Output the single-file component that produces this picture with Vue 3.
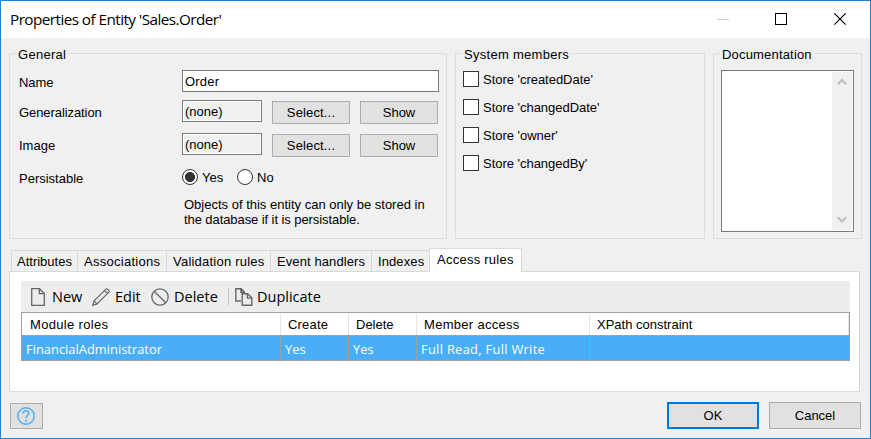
<script setup>
import { ref } from 'vue'

const name = ref('Order')
const references = [
  { label: 'Generalization', cls: 'generalization' },
  { label: 'Image', cls: 'image' }
]
const members = ['createdDate', 'changedDate', 'owner', 'changedBy']
const tabs = [
  { label: 'Attributes', cls: 'attributes' },
  { label: 'Associations', cls: 'associations' },
  { label: 'Validation rules', cls: 'validation' },
  { label: 'Event handlers', cls: 'events' },
  { label: 'Indexes', cls: 'indexes' },
  { label: 'Access rules', cls: 'access' }
]
const activeTab = ref('access')
const columns = ['Module roles', 'Create', 'Delete', 'Member access', 'XPath constraint']
const rule = ['FinancialAdministrator', 'Yes', 'Yes', 'Full Read, Full Write', '']
</script>

<template>
  <div class="window">
    <header class="titlebar">
      <span class="title">Properties of Entity 'Sales.Order'</span>
      <svg class="caption" width="130" height="14" viewBox="0 0 130 14" shape-rendering="crispEdges">
        <path d="M0 6.5h12" stroke="#ccc" />
        <rect x="58.5" y="0.5" width="11" height="11" fill="none" stroke="#000" />
        <path d="M117.3 0.3l11.4 11.4M128.7 0.3l-11.4 11.4" stroke="#000" stroke-width="1.1" shape-rendering="auto" />
      </svg>
    </header>

    <main class="groups">
      <section class="group general">
        <h2 class="legend">General</h2>
        <div class="form">
          <div class="row name">
            <span class="label">Name</span>
            <div class="input">{{ name }}</div>
          </div>
          <div v-for="item in references" :key="item.cls" class="row reference" :class="item.cls">
            <span class="label">{{ item.label }}</span>
            <div class="readonly">(none)</div>
            <button class="button select">Select...</button>
            <button class="button show">Show</button>
          </div>
          <div class="row persist">
            <span class="label">Persistable</span>
            <span class="radio on"></span><span class="yes">Yes</span>
            <span class="radio"></span><span class="no">No</span>
          </div>
          <p class="hint"><span class="line first">Objects of this entity can only be stored in</span><span class="line second">the database if it is persistable.</span></p>
        </div>
      </section>

      <section class="group system">
        <h2 class="legend">System members</h2>
        <ul class="checks">
          <li v-for="m in members" :key="m"><span class="box"></span><span>Store '{{ m }}'</span></li>
        </ul>
      </section>

      <section class="group docs">
        <h2 class="legend">Documentation</h2>
        <div class="textarea">
          <div class="scrollbar">
            <svg width="10" height="8" viewBox="0 0 10 8"><path d="M0.7 6.3L5 2l4.3 4.3" fill="none" stroke="#bfbfbf" stroke-width="2.2" /></svg>
            <svg width="10" height="8" viewBox="0 0 10 8"><path d="M0.7 1.2L5 5.5l4.3-4.3" fill="none" stroke="#bfbfbf" stroke-width="2.2" /></svg>
          </div>
        </div>
      </section>
    </main>

    <nav class="tabs">
      <button v-for="t in tabs" :key="t.cls" class="tab" :class="[t.cls, { active: t.cls === activeTab }]">{{ t.label }}</button>
    </nav>
    <section class="panel">
      <div class="toolbar">
        <svg class="tool-icon page" width="15" height="18" viewBox="0 0 15 18" fill="none" stroke="#666" stroke-width="1.3">
          <path d="M1.7.7h7.8l4.8 4.8v11.8H1.7z" /><path d="M9.3.7v5h5" />
        </svg>
        <span class="tool new">New</span>
        <svg class="tool-icon" width="18" height="18" viewBox="0 0 18 18" fill="none" stroke="#666" stroke-width="1.2">
          <path d="M.7 17.3l1.4-4.4L13.9 1.1q.8-.7 1.6.1l1.3 1.3q.8.8.1 1.6L5.1 15.9zM12.5 2.5l3 3M2.1 12.9l3 3" />
        </svg>
        <span class="tool edit">Edit</span>
        <svg class="tool-icon" width="18" height="18" viewBox="0 0 18 18" fill="none" stroke="#666" stroke-width="1.3">
          <circle cx="9" cy="9" r="8.2" /><path d="M3.2 3.2l11.6 11.6" />
        </svg>
        <span class="tool delete">Delete</span>
        <span class="divider"></span>
        <svg class="tool-icon" width="18" height="18" viewBox="0 0 18 18" fill="none" stroke="#666" stroke-width="1.4">
          <path d="M6 13H.8V.8h5.4l3 3v1.4M5.9.8v3.4h3" /><path d="M7.2 5.7h5.4l4.2 4.1v7.4H7.2z" /><path d="M12.4 5.7v4.4h4.4" />
        </svg>
        <span class="tool duplicate">Duplicate</span>
      </div>
      <div class="table">
        <div class="tr head"><span v-for="c in columns" :key="c" class="th">{{ c }}</span></div>
        <div class="tr data"><span v-for="(c, i) in rule" :key="i" class="td">{{ c }}</span></div>
      </div>
    </section>

    <footer class="footer">
      <button class="button help">
        <svg width="18" height="18" viewBox="0 0 18 18" fill="none" stroke="#4aaef5">
          <circle cx="9" cy="9" r="8.2" stroke-width="1.4" />
          <path d="M6.2 6.5c0-3.5 5.6-3.5 5.6-.2 0 2.2-2.8 2.1-2.8 5" stroke-width="1.5" /><path d="M9 12.8v2" stroke-width="1.8" />
        </svg>
      </button>
      <button class="button ok">OK</button>
      <button class="button cancel">Cancel</button>
    </footer>
  </div>
</template>

<style>
body { margin: 0; overflow: hidden; }
</style>

<style scoped>
* { box-sizing: border-box; }
.window {
  width: 871px; height: 439px; border: 1px solid #1883d7; background: #f0f0f0; color: #000;
  font: 13px/16px "Liberation Sans", Arial, sans-serif; white-space: nowrap;
}
.titlebar { height: 37px; background: #fff; display: flex; justify-content: space-between; padding: 0 23px 0 9px; }
.title { font: 15.3px/37px "Open Sans", "Noto Sans", sans-serif; letter-spacing: -.56px; }
.caption { margin-top: 12px; }

.groups { display: grid; grid-template-columns: 438px 250px 149px; gap: 8px; padding: 15px 8px 0; }
.group { height: 186px; border: 1px solid #dcdcdc; }
.legend { width: fit-content; height: 16px; margin: -7px 0 0 6px; padding: 0 2px; background: #f0f0f0; font: inherit; letter-spacing: .28px; }
.docs .legend { letter-spacing: .18px; }
.form { padding: 7px 7px 0 9px; }
.row { display: flex; align-items: flex-start; height: 33px; }
.row.name { height: 30px; }
.label { width: 163px; padding-top: 5px; }
.name .label, .generalization .label { letter-spacing: -.08px; }
.input, .readonly { border: 1px solid #7a7a7a; height: 22px; padding: 3px 2px 0; line-height: 16px; }
.input { flex: 1; background: #fff; letter-spacing: .2px; }
.readonly { width: 80px; margin-right: 10px; box-shadow: inset 0 0 0 1px #fff; }
.button { border: 1px solid #adadad; background: #e1e1e1; padding: 0; font: inherit; color: inherit; }
.reference .button { width: 78px; height: 23px; margin-top: 1px; }
.reference .select { margin-right: 10px; letter-spacing: .15px; }
.persist { height: 32px; padding-top: 3px; }
.persist .label { padding-top: 2px; }
.radio { width: 16px; height: 16px; border: 1px solid #333; border-radius: 50%; background: #fff; margin-right: 4px; }
.radio.on { background: radial-gradient(circle, #333 4.7px, #fff 5.3px); }
.yes, .no { padding-top: 1px; }
.yes { width: 35px; }
.hint { margin: -1px 0 0 165px; line-height: 15px; }
.line { display: block; }
.second { letter-spacing: -.08px; }
.checks { list-style: none; margin: 0; padding: 8px 0 0 7px; }
.checks li { display: flex; height: 28px; gap: 4px; line-height: 17px; letter-spacing: -.03px; }
.box { width: 16px; height: 16px; border: 1px solid #333; background: #fff; }
.textarea { width: 133px; height: 162px; margin: 7px 0 0 7px; border: 1px solid #7a7a7a; background: #fff; padding: 1px; display: flex; justify-content: flex-end; }
.scrollbar { width: 20px; background: #f0f0f0; display: flex; flex-direction: column; justify-content: space-between; align-items: center; padding: 6px 0; }

.tabs { display: flex; align-items: flex-end; height: 32px; padding-left: 10px; }
.tab { height: 21px; border: 1px solid #d9d9d9; border-width: 1px 0 0 1px; background: #f0f0f0; padding: 1px 0 0 5px; text-align: left; font: inherit; color: inherit; }
.attributes { width: 66px; }
.associations { width: 89px; padding-left: 6px; letter-spacing: .27px; }
.validation { width: 104px; padding-left: 6px; letter-spacing: .22px; }
.events { width: 101px; padding-left: 6px; letter-spacing: .1px; }
.indexes { width: 58px; padding-left: 6px; letter-spacing: .1px; }
.tab.active { width: 93px; height: 24px; margin-bottom: -1px; padding: 0 0 1px 7px; border-right-width: 1px; background: #fff; letter-spacing: .25px; }
.panel { width: 851px; height: 121px; margin-left: 8px; border: 1px solid #d9d9d9; background: #fff; padding: 9px 9px 0 11px; }
.toolbar { height: 31px; background: #ededed; display: flex; align-items: center; padding-left: 9px; }
.tool { font: 14.5px/30px "Open Sans", "Noto Sans", sans-serif; }
.tool.new { margin-left: 7px; width: 40px; }
.tool.edit { margin-left: 5px; width: 36px; }
.tool.delete { margin-left: 5px; width: 54px; }
.divider { width: 1px; height: 17px; background: #c4c4c4; margin-right: 6px; }
.tool.duplicate { margin-left: 4px; }
.table { border: 1px solid #a0a0a0; height: 49px; }
.tr { display: grid; grid-template-columns: 259px 68px 68px 173px 1fr; }
.head { height: 22px; padding-top: 1px; }
.th { border-right: 1px solid #e5e5e5; padding: 3px 0 0 7px; }
.th:first-child { padding-left: 8px; letter-spacing: .33px; }
.th:nth-child(2) { letter-spacing: .2px; }
.th:nth-child(4) { letter-spacing: .3px; }
.data { height: 25px; border-top: 1px solid #a0a0a0; background: #48aef8; color: #fff; }
.td { height: 24px; overflow: hidden; border-right: 1px solid #a0a0a0; padding-left: 4px; font: 12.8px/26px "Open Sans", "Noto Sans", sans-serif; letter-spacing: .05px; }
.td:nth-child(4) { letter-spacing: .33px; }
.td:last-child { border-right: 0; }

.footer { display: flex; padding: 10px 9px 0; }
.footer .button { width: 92px; height: 27px; }
.footer .help { width: 33px; height: 26px; margin-top: 1px; margin-right: auto; padding-right: 1px; display: flex; align-items: center; justify-content: center; }
.footer .ok { border: 2px solid #0078d7; margin-right: 10px; }
</style>
